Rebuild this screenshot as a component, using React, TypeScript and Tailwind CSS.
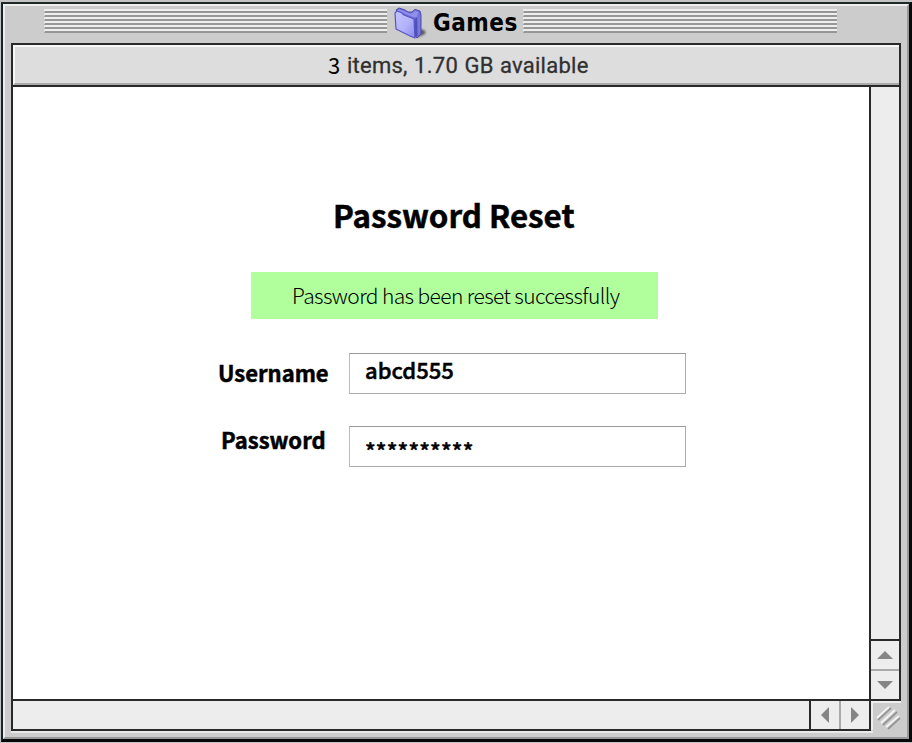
import type { ReactNode } from 'react';

const SANS = "font-['Noto_Sans_CJK_SC','Noto_Sans',sans-serif]";

function Stripes({ className }: { className: string }) {
  return (
    <div className={`flex flex-col ${className}`}>
      {[0, 1, 2, 3, 4, 5].map((i) => (
        <div key={i} className="h-1 w-full border-t-2 border-b-2 border-t-[#eeeeee] border-b-[#969696] border-l border-l-[#dedede]" />
      ))}
    </div>
  );
}

function Folder() {
  return (
    <svg className="ml-[6px] mt-px h-[34px] w-[36px] shrink-0" viewBox="0 0 36 34">
      <defs>
        <linearGradient id="face" x1="0" y1="0" x2="1" y2="1">
          <stop offset="0" stopColor="#c4c4ff" />
          <stop offset="0.55" stopColor="#b2b2fb" />
          <stop offset="1" stopColor="#8888ee" />
        </linearGradient>
        <filter id="soft"><feGaussianBlur stdDeviation="1.2" /></filter>
      </defs>
      <path d="M23 31 L32 27 Q34 23 27 22 Z" fill="#444" opacity="0.85" filter="url(#soft)" />
      <path d="M3 3 L6 1 L12 3 L15 5 L19 5 L22 2.4 L27 4 L28 8 L28 27 L24 31 Z" fill="#7070d8" stroke="#4c4cae" strokeWidth="1" />
      <path d="M4 3.5 L6 2.2 L13 5 L18 7 L22 4 L25.5 5 L24 10 L20 10 Z" fill="#8f8fec" />
      <path d="M2 6 L4 4 L9 6 L11 8 L21 12 L22 31 L17 29 L3 22 Z" fill="url(#face)" stroke="#5656c2" strokeWidth="1.2" strokeLinejoin="round" />
      <path d="M22 12 L24 10 L24.5 29 L22 30 Z" fill="#5050bb" />
      <path d="M25 10 L27 8 L27 26 L25 28 Z" fill="#7979de" />
    </svg>
  );
}

function Arrow({ d, className }: { d: string; className: string }) {
  return (
    <div className={`flex items-center justify-center bg-[#ededed] ${className}`}>
      <svg className="h-4 w-4" viewBox="0 0 16 16"><path d={d} fill="#858585" /></svg>
    </div>
  );
}

function Field({ label, labelClass, children, className }: { label: string; labelClass: string; children: ReactNode; className: string }) {
  return (
    <div className={`flex h-[41px] ${className}`}>
      <div className={`w-[131px] shrink-0 whitespace-nowrap font-bold text-[22px] leading-[39px] [-webkit-text-stroke:0.5px_black] ${labelClass}`}>{label}</div>
      <div className="h-[41px] w-[337px] border border-t-[#999999] border-r-[#aaaaaa] border-b-[#aaaaaa] border-l-[#bbbbbb] pl-[15px] [-webkit-text-stroke:0.5px_black]">{children}</div>
    </div>
  );
}

export default function App() {
  return (
    <div className="h-[743px] w-[912px] overflow-hidden bg-[#c4c4c4] pl-px pt-0.5">
      <div className="h-[740px] w-[911px] border-t-2 border-r-[3px] border-b-[3px] border-l-2 border-t-[#202827] border-r-[#08080a] border-b-[#08080a] border-l-[#17232b]">
        <div className="h-[735px] w-[906px] border-2 border-t-[#ededed] border-l-[#ededed] border-r-[#999999] border-b-[#999999] bg-[#cccccc]">
          <header className="flex h-[37px] overflow-hidden">
            <Stripes className="ml-[39px] mt-[3px] w-[343px]" />
            <Folder />
            <h1 className="ml-[4px] mt-[-1px] w-[90px] whitespace-nowrap font-['DejaVu_Sans_Condensed','DejaVu_Sans',sans-serif] text-[24px] leading-[36px] font-bold tracking-[0.5px]">Games</h1>
            <Stripes className="mt-[3px] w-[314px]" />
          </header>
          <main className="ml-[6px] flex w-[890px] flex-col">
            <div className="h-[44px] border-2 border-[#292929]">
              <div className={`flex h-[40px] whitespace-nowrap border-t-2 border-l-2 border-b-2 border-t-[#f7f7f7] border-l-[#f7f7f7] border-b-[#aaaaaa] bg-[#dddddd] pl-[313px] leading-[38px] ${SANS}`}>
                <span className="mt-[-2px] w-[19px] text-[22px]">3</span>
                <span className="font-['Roboto',sans-serif] text-[22px] tracking-[0.25px] [word-spacing:0.7px] text-[#303030] [-webkit-text-stroke:0.3px_#303030]">items, 1.70 GB available</span>
              </div>
            </div>
            <div className="flex h-[612px] w-[890px]">
              <section className={`h-[612px] w-[858px] shrink-0 border-l-2 border-[#292929] bg-white text-black ${SANS}`}>
                <h2 className="ml-[320px] pt-[103px] whitespace-nowrap text-[31.3px] leading-[50px] font-bold [-webkit-text-stroke:0.5px_black]">Password Reset</h2>
                <div className="mt-[32px] ml-[238px] h-[47px] w-[407px] whitespace-nowrap bg-[#b0ff9c] pl-[41px] text-[21px] leading-[46px] font-light tracking-[-0.61px]">Password has been reset successfully</div>
                <Field className="mt-[34px] ml-[205px]" label="Username" labelClass=""><div className="text-[22px] leading-[31px] font-medium">abcd555</div></Field>
                <Field className="mt-[32px] ml-[205px]" label="Password" labelClass="pl-[3px] mt-[-6px]"><div className="text-[22px] leading-[47px] font-medium tracking-[0.2px]">**********</div></Field>
              </section>
              <aside className="flex h-[612px] w-[32px] shrink-0 flex-col border-x-2 border-[#292929]">
                <div className="h-[554px] border-b-2 border-[#292929] bg-[#ededed]" />
                <Arrow className="h-[28px]" d="M0 12 L8 4 L16 12Z" />
                <div className="h-[2px] bg-[#aaaaaa]" />
                <Arrow className="h-[28px]" d="M0 4 L8 12 L16 4Z" />
              </aside>
            </div>
            <div className="flex h-[32px] w-[890px]">
              <div className="flex h-[32px] w-[860px] border-2 border-[#292929]">
                <div className="w-[798px] border-r-2 border-[#292929] bg-[#ededed]" />
                <Arrow className="w-[28px]" d="M12 0 L4 8 L12 16Z" />
                <div className="w-[2px] bg-[#aaaaaa]" />
                <Arrow className="w-[28px]" d="M4 0 L12 8 L4 16Z" />
              </div>
              <div className="h-[32px] w-[30px] border-t-2 border-[#292929]">
                <svg className="h-[30px] w-[30px]" viewBox="0 0 30 30">
                  <path d="M1 29 V1 H30" fill="none" stroke="#eeeeee" strokeWidth="2" />
                  <g fill="none" strokeWidth="1.8">
                    <path d="M6 17 L18 6 M10 22 L24 9 M15 26 L28 15" stroke="#f4f4f4" />
                    <path d="M7 19 L20 7 M12 24 L26 11 M17 28 L29 17" stroke="#969696" />
                  </g>
                </svg>
              </div>
            </div>
            <div className="h-[2px] w-[862px] bg-[#e9e9e9]" />
          </main>
        </div>
      </div>
    </div>
  );
}
